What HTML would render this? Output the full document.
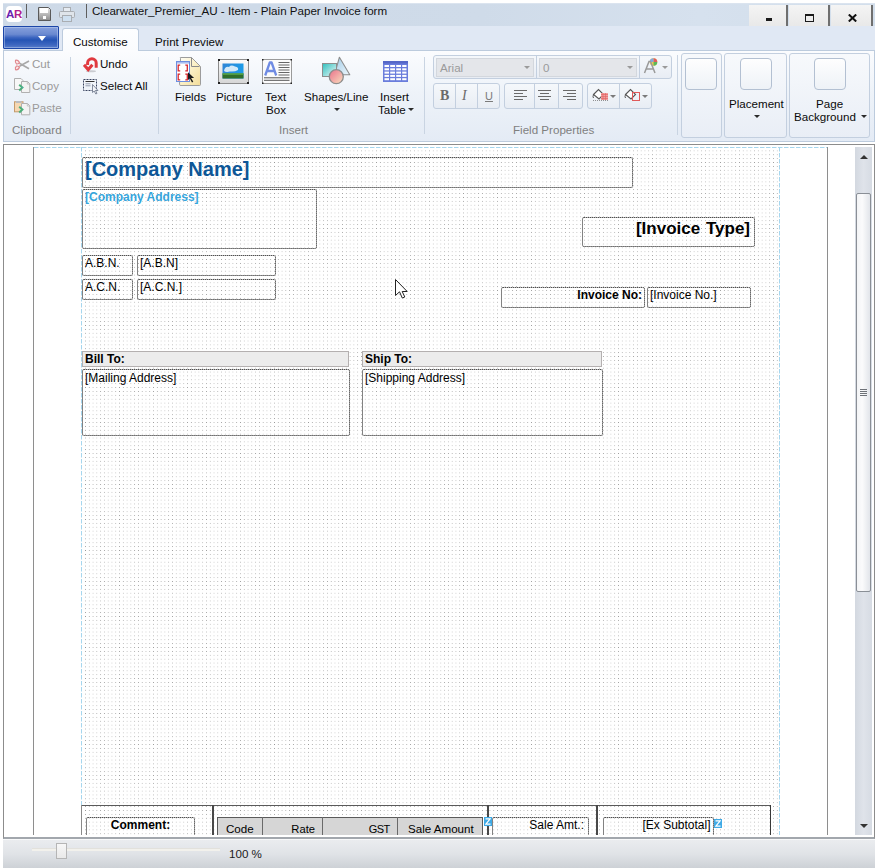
<!DOCTYPE html>
<html><head><meta charset="utf-8">
<style>
*{margin:0;padding:0;box-sizing:border-box}
html,body{width:876px;height:868px;overflow:hidden;background:#fff;font-family:"Liberation Sans",sans-serif;}
.a{position:absolute}
.t{position:absolute;white-space:nowrap;font-size:11.6px;color:#0a0a0a;line-height:14px}
.g{color:#9a9a9a}
#title{left:3px;top:3px;width:872px;height:23px;border-top:1px solid #dbe4ef;background:linear-gradient(90deg,#cdd9e7 0%,#cfdbe9 55%,#d6e1ee 80%,#d2deeb 100%)}
#tabrow{left:3px;top:26px;width:872px;height:25px;background:#e0e8f4}
#ribbon{left:3px;top:50px;width:872px;height:92px;border:1px solid #bccbdd;background:linear-gradient(#fbfcfe,#eef3f9 45%,#e4ebf5)}
#doc{left:3px;top:144px;width:872px;height:695px;border:1px solid #8c8c8c;border-bottom:2px solid #a2a7ad;background:#fff}
#status{left:3px;top:839px;width:872px;height:29px;border-top:1px solid #f8f9fa;background:linear-gradient(#eaecef,#e0e3e7 50%,#cdd1d6)}
.wb{position:absolute;top:5px;height:21px;background:linear-gradient(#f4f4f4,#e9e9e9);border-right:2px solid #6f6f6f}
.sep{position:absolute;width:1px;background:#c9d4e2}
.gb{position:absolute;border:1px solid #c3cfdf;border-radius:3px;background:linear-gradient(#f7f9fc,#e9eef6)}
.sq{position:absolute;border:1px solid #b3c0d2;border-radius:4px;background:linear-gradient(#fefefe,#eef2f7)}
.arr{position:absolute;width:0;height:0;border-left:3px solid transparent;border-right:3px solid transparent;border-top:3px solid #2a2a2a}
.fb{position:absolute;border:1px solid #c3cfdf;border-radius:3px;background:linear-gradient(#f5f8fb,#e8edf4)}
.dt{position:absolute;white-space:nowrap;color:#000;font-size:12px;line-height:14px}
.box{position:absolute;border:1px solid #b4b4b4;border-radius:2px}
.box::after{content:'';position:absolute;left:-1px;top:-1px;right:-1px;bottom:-1px;border:1px dotted #505050;border-radius:2px}
.dv{position:absolute;width:1px;background:#c3cfdf}
</style></head><body>
<!-- title bar -->
<div id="title" class="a"></div>
<div class="a" style="left:6px;top:6px;width:16px;height:16px;background:#fff;border-radius:4px"></div>
<div class="a" style="left:6px;top:8px;width:16px;text-align:center;font-weight:bold;font-size:11.5px;line-height:12px;letter-spacing:-0.3px;color:#8a1fa8"><span style="color:#6a1fb0">A</span><span style="color:#b0208e">R</span></div>
<div class="a" style="left:26px;top:4px;width:1px;height:14px;background:#5e5e5e"></div>
<svg class="a" style="left:38px;top:7px" width="13" height="14" viewBox="0 0 13 14">
 <path d="M0.5 0.5h10l2 2v11h-12z" fill="url(#fl)" stroke="#5a5a5a"/>
 <defs><linearGradient id="fl" x1="0" y1="0" x2="0" y2="1"><stop offset="0" stop-color="#e8e8e8"/><stop offset="1" stop-color="#8c8c8c"/></linearGradient></defs>
 <rect x="2" y="1" width="8" height="5" fill="#fff"/>
 <rect x="5" y="9" width="3" height="3" fill="#fff"/>
</svg>
<svg class="a" style="left:59px;top:7px" width="16" height="15" viewBox="0 0 16 15">
 <rect x="4.5" y="0.5" width="7" height="4" fill="#e6ebf1" stroke="#a9adb2"/>
 <rect x="0.5" y="4.5" width="15" height="6" rx="1" fill="#dfe4ea" stroke="#a9adb2"/>
 <rect x="3.5" y="8.5" width="9" height="6" fill="#cfe0f0" stroke="#a9adb2"/>
</svg>
<div class="a" style="left:86px;top:4px;width:1px;height:14px;background:#5e5e5e"></div>
<div class="t" style="left:92px;top:4px;color:#111">Clearwater_Premier_AU - Item - Plain Paper Invoice form</div>
<div class="wb" style="left:749px;width:39px"></div>
<div class="wb" style="left:789px;width:41px"></div>
<div class="wb" style="left:831px;width:42px"></div>
<div class="a" style="left:766px;top:18px;width:6px;height:3px;background:#1a1a1a"></div>
<div class="a" style="left:805px;top:14px;width:9px;height:8px;border:1.5px solid #1a1a1a;border-top-width:2.5px"></div>
<svg class="a" style="left:848px;top:14px" width="9" height="8" viewBox="0 0 9 8"><path d="M0.8 0.5L8.2 7.5M8.2 0.5L0.8 7.5" stroke="#111" stroke-width="2"/></svg>

<!-- tab row -->
<div id="tabrow" class="a"></div>
<div class="a" style="left:3px;top:26px;width:56px;height:23px;border:1px solid #1c46a8;border-radius:1px;box-shadow:inset 0 0 0 1px rgba(200,215,245,0.45);background:linear-gradient(#86a0dc,#6a89d0 35%,#3d66c0 50%,#2554b4 62%,#3e67c0 85%,#5a7ecb)"></div>
<div class="arr" style="left:38px;top:36px;border-left-width:4px;border-right-width:4px;border-top:5px solid #fff"></div>
<div class="a" style="left:62px;top:28px;width:77px;height:24px;border:1px solid #bccbdd;border-bottom:none;border-radius:3px 3px 0 0;background:linear-gradient(#fdfeff,#f9fbfd)"></div>
<div class="t" style="left:73px;top:35px">Customise</div>
<div class="t" style="left:155px;top:35px">Print Preview</div>

<!-- ribbon -->
<div id="ribbon" class="a"></div>
<div class="a" style="left:63px;top:50px;width:75px;height:2px;background:#fbfcfe"></div>

<!-- clipboard -->
<svg class="a" style="left:14px;top:59px" width="16" height="12" viewBox="0 0 16 12">
 <path d="M5.5 4.2L15 9.8M5.5 7.2L15 2" stroke="#a8a8a8" stroke-width="1.6"/>
 <path d="M1.5 1.2Q4.5 0.8 5.5 4Q4 5.2 2.5 5Q0.8 3.5 1.5 1.2z" fill="#fbe9ea" stroke="#e0868c" stroke-width="1.1"/>
 <path d="M1.5 10.8Q4.5 11.2 5.5 8Q4 6.8 2.5 7Q0.8 8.5 1.5 10.8z" fill="#fbe9ea" stroke="#e0868c" stroke-width="1.1"/>
</svg>
<div class="t g" style="left:32px;top:57px">Cut</div>
<svg class="a" style="left:14px;top:78px" width="17" height="16" viewBox="0 0 17 16">
 <path d="M0.5 0.5h6.5l2 2v9h-8.5z" fill="#f7f7f7" stroke="#b0b0b0"/>
 <path d="M7.5 3.5h6l2.3 2.3v8.7h-8.3z" fill="#f3f3f3" stroke="#b0b0b0"/>
 <path d="M13.3 3.8v2.2h2.2" fill="none" stroke="#b8b8b8" stroke-width="0.8"/>
 <path d="M5.2 6.8L8.4 9.6L5.2 12.4" fill="none" stroke="#4cb07a" stroke-width="2"/>
 <path d="M8.4 9.6l-0.8 -0.8" stroke="#4a9fd8" stroke-width="1"/>
</svg>
<div class="t g" style="left:32px;top:79px">Copy</div>
<svg class="a" style="left:14px;top:101px" width="17" height="15" viewBox="0 0 17 15">
 <rect x="0.5" y="0.8" width="8.5" height="10" fill="#f6d8b2" stroke="#c49a6c"/>
 <rect x="2" y="0" width="5.5" height="2" fill="#b9bcc0"/>
 <path d="M7.5 2.5h6l2.3 2.3v9h-8.3z" fill="#f3f3f3" stroke="#b0b0b0"/>
 <path d="M13.3 2.8v2.2h2.2" fill="none" stroke="#b8b8b8" stroke-width="0.8"/>
 <path d="M5.2 5.8L8.4 8.6L5.2 11.4" fill="none" stroke="#4cb07a" stroke-width="2"/>
</svg>
<div class="t g" style="left:32px;top:101px">Paste</div>
<div class="sep" style="left:70px;top:57px;height:77px"></div>
<svg class="a" style="left:83px;top:57px" width="16" height="16" viewBox="0 0 16 16">
 <ellipse cx="8" cy="14.2" rx="5" ry="1" fill="#c9cbd0"/>
 <path d="M13.2 10.8V6A4.3 4.3 0 0 0 4.6 6V8" fill="none" stroke="#e0393f" stroke-width="3"/>
 <path d="M1 7.8L5.2 12.6L9.4 7.8" fill="none" stroke="#e0393f" stroke-width="3" stroke-linejoin="miter"/>
</svg>
<div class="t" style="left:100px;top:57px">Undo</div>
<svg class="a" style="left:83px;top:79px" width="16" height="16" viewBox="0 0 16 16">
 <rect x="0.5" y="0.5" width="13" height="11" fill="none" stroke="#3a4560" stroke-width="1" stroke-dasharray="2 1"/>
 <path d="M2.5 2.5h9" stroke="#333" stroke-width="1"/>
 <path d="M2.5 4.8h5M2.5 6.8h5" stroke="#8a94a8" stroke-width="0.9"/>
 <path d="M9.5 5.5V13.5L11.2 12L12.8 15L14 14.4L12.5 11.5H15z" fill="#f4f6fa" stroke="#6a7488" stroke-width="0.8"/>
</svg>
<div class="t" style="left:100px;top:79px">Select All</div>
<div class="t g" style="left:12px;top:123px;color:#7f7f7f">Clipboard</div>
<div class="sep" style="left:158px;top:57px;height:77px"></div>

<!-- insert -->
<svg class="a" style="left:175px;top:56px" width="27" height="31" viewBox="0 0 27 31">
 <defs><linearGradient id="fy" x1="0" y1="0" x2="1" y2="1"><stop offset="0" stop-color="#fffef6"/><stop offset="0.5" stop-color="#fbf0c6"/><stop offset="1" stop-color="#f3dc98"/></linearGradient></defs>
 <path d="M5.5 2.5Q4.5 1.5 6 1.5H16.5L25.5 10.5V28.5Q25.5 29.5 24.5 29.5H6Q4.5 29.5 4.5 28.5z" fill="url(#fy)" stroke="#9c9c9c"/>
 <path d="M16.5 1.5V10.5H24.5" fill="none" stroke="#8a8a8a"/>
 <rect x="1.5" y="5.5" width="13" height="20" fill="#fff" stroke="#6d8fe0"/>
 <rect x="2" y="6" width="12" height="1.6" fill="#a9bdf0"/>
 <path d="M5.2 9.2H3.2V14.8H5.2M10.3 9.2H12.3V14.8H10.3M5.2 18.2H3.2V23.8H5.2M10.3 18.2H12.3V23.8H10.3" fill="none" stroke="#d8262c" stroke-width="1.3"/>
 <path d="M13 16.2V24l1.8-1.6 2.2 4 1.3-.7-2.2-3.8h3z" fill="#1a1a1a"/>
</svg>
<div class="t" style="left:175px;top:90px">Fields</div>
<svg class="a" style="left:218px;top:59px" width="31" height="25" viewBox="0 0 31 25">
 <defs><linearGradient id="pf" x1="0" y1="0" x2="0" y2="1"><stop offset="0" stop-color="#fbfbfb"/><stop offset="1" stop-color="#d6d6d6"/></linearGradient>
 <linearGradient id="sky" x1="0" y1="0" x2="1" y2="0"><stop offset="0" stop-color="#2f86d6"/><stop offset="1" stop-color="#1c9be8"/></linearGradient></defs>
 <rect x="0.5" y="0.5" width="30" height="24" fill="url(#pf)" stroke="#8c8c8c"/>
 <rect x="0" y="0" width="2" height="2" fill="#222"/><rect x="29" y="0" width="2" height="2" fill="#222"/><rect x="0" y="23" width="2" height="2" fill="#222"/><rect x="29" y="23" width="2" height="2" fill="#222"/>
 <rect x="4.5" y="4.5" width="21" height="15" fill="url(#sky)"/>
 <path d="M6 12Q7 7 11 8Q13 5.5 17 7.5Q21 8 20 11Q17 13 12 12.5Q8 13.5 6 12z" fill="#e6f3fb" opacity="0.9"/>
 <rect x="4.5" y="14.5" width="21" height="5" fill="#2f6e2a"/>
 <path d="M4.5 15h21" stroke="#5aa84a" stroke-width="1.5"/>
</svg>
<div class="t" style="left:216px;top:90px">Picture</div>
<svg class="a" style="left:262px;top:59px" width="31" height="25" viewBox="0 0 31 25">
 <rect x="0.5" y="0.5" width="29" height="24" fill="#fbfbfb" stroke="#9a9a9a"/>
 <rect x="0" y="0" width="1.5" height="1.5" fill="#222"/><rect x="28.5" y="0" width="1.5" height="1.5" fill="#222"/><rect x="0" y="23.5" width="1.5" height="1.5" fill="#222"/><rect x="28.5" y="23.5" width="1.5" height="1.5" fill="#222"/>
 <path d="M3.2 16.5L7.8 3.5h1.8L14.2 16.5M5 12h8" fill="none" stroke="#6f8be3" stroke-width="2.3" stroke-linejoin="round"/>
 <path d="M16.5 3.5h11M16.5 6h11M16.5 8.5h11M16.5 11h11M16.5 13.5h11M16.5 16h11" stroke="#555" stroke-width="0.9"/>
 <path d="M2 18.8h25.5M2 21.3h25.5" stroke="#555" stroke-width="1"/>
</svg>
<div class="t" style="left:265px;top:90px">Text</div>
<div class="t" style="left:266px;top:103px">Box</div>
<svg class="a" style="left:320px;top:56px" width="32" height="30" viewBox="0 0 32 30">
 <defs><linearGradient id="sq" x1="0" y1="0" x2="1" y2="1"><stop offset="0" stop-color="#2fbfbd"/><stop offset="1" stop-color="#f2fafa"/></linearGradient>
 <linearGradient id="tri" x1="0" y1="0" x2="1" y2="1"><stop offset="0" stop-color="#9fcbe8"/><stop offset="1" stop-color="#eef6fb"/></linearGradient>
 <linearGradient id="ci" x1="0" y1="0" x2="1" y2="1"><stop offset="0" stop-color="#ea6f8a"/><stop offset="1" stop-color="#f9e1c0"/></linearGradient></defs>
 <path d="M19.4 1.2L29.8 18.8H14.5z" fill="url(#tri)" stroke="#8d8d8d" stroke-width="1.1" stroke-linejoin="round"/>
 <rect x="2.5" y="7.5" width="14" height="13" fill="url(#sq)" stroke="#8d8d8d"/>
 <circle cx="16.3" cy="20.7" r="7" fill="url(#ci)" stroke="#8d8d8d" stroke-width="1.3"/>
</svg>
<div class="t" style="left:304px;top:90px">Shapes/Line</div>
<div class="arr" style="left:334px;top:108px"></div>
<svg class="a" style="left:383px;top:61px" width="25" height="21" viewBox="0 0 25 21">
 <rect x="0" y="0" width="25" height="21" fill="#6a7ddc"/>
 <rect x="0" y="0" width="25" height="2.5" fill="#5668c8"/>
 <g fill="#fff">
  <rect x="1.5" y="4" width="4.5" height="2"/><rect x="7.2" y="4" width="4.8" height="2"/><rect x="13.2" y="4" width="4.8" height="2"/><rect x="19.2" y="4" width="4.3" height="2"/>
  <rect x="1.5" y="7.3" width="4.5" height="2"/><rect x="7.2" y="7.3" width="4.8" height="2"/><rect x="13.2" y="7.3" width="4.8" height="2"/><rect x="19.2" y="7.3" width="4.3" height="2"/>
  <rect x="1.5" y="10.6" width="4.5" height="2"/><rect x="7.2" y="10.6" width="4.8" height="2"/><rect x="13.2" y="10.6" width="4.8" height="2"/><rect x="19.2" y="10.6" width="4.3" height="2"/>
  <rect x="1.5" y="13.9" width="4.5" height="2"/><rect x="7.2" y="13.9" width="4.8" height="2"/><rect x="13.2" y="13.9" width="4.8" height="2"/><rect x="19.2" y="13.9" width="4.3" height="2"/>
  <rect x="1.5" y="17.2" width="4.5" height="2"/><rect x="7.2" y="17.2" width="4.8" height="2"/><rect x="13.2" y="17.2" width="4.8" height="2"/><rect x="19.2" y="17.2" width="4.3" height="2"/>
 </g>
</svg>
<div class="t" style="left:380px;top:90px">Insert</div>
<div class="t" style="left:378px;top:103px">Table</div>
<div class="arr" style="left:408px;top:108px"></div>
<div class="t g" style="left:279px;top:123px;color:#7f7f7f">Insert</div>
<div class="sep" style="left:424px;top:57px;height:77px"></div>

<!-- field properties -->
<div class="fb" style="left:433px;top:55px;width:239px;height:24px"></div>
<div class="a" style="left:436px;top:58px;width:98px;height:19px;background:#e4e6ea;border:1px solid #d3d7dd"></div>
<div class="a" style="left:539px;top:58px;width:98px;height:19px;background:#e4e6ea;border:1px solid #d3d7dd"></div>
<div class="dv" style="left:536px;top:56px;height:22px"></div>
<div class="dv" style="left:639px;top:56px;height:22px"></div>
<div class="t" style="left:440px;top:61px;color:#9a9a9a;font-size:11.6px">Arial</div>
<div class="t" style="left:543px;top:61px;color:#9a9a9a">0</div>
<div class="arr" style="left:524px;top:66px;border-top-color:#9a9a9a"></div>
<div class="arr" style="left:627px;top:66px;border-top-color:#9a9a9a"></div>
<svg class="a" style="left:643px;top:57px" width="16" height="17" viewBox="0 0 16 17">
 <circle cx="10.5" cy="5" r="3.8" fill="#f2c94c"/>
 <path d="M10.5 5V1.2A3.8 3.8 0 0 1 14.3 5z" fill="#e25c5c"/>
 <path d="M10.5 5h3.8A3.8 3.8 0 0 1 10.5 8.8z" fill="#5cb85c"/>
 <path d="M6.7 5A3.8 3.8 0 0 1 10.5 1.2V5z" fill="#7fa8e0"/>
 <path d="M1.5 16L6 4.5h1.5L12 16M3.3 12h7" fill="none" stroke="#9a9a9a" stroke-width="1.5"/>
</svg>
<div class="arr" style="left:662px;top:66px;border-top-color:#9a9a9a"></div>

<div class="fb" style="left:433px;top:83px;width:67px;height:26px"></div>
<div class="dv" style="left:455px;top:84px;height:24px"></div>
<div class="dv" style="left:477px;top:84px;height:24px"></div>
<div class="a" style="left:440px;top:88px;font-family:'Liberation Serif',serif;font-weight:bold;font-size:14px;line-height:16px;color:#6a6a6a">B</div>
<div class="a" style="left:462px;top:88px;font-family:'Liberation Serif',serif;font-style:italic;font-size:14px;line-height:16px;color:#6a6a6a">I</div>
<div class="a" style="left:485px;top:88px;font-size:11px;line-height:16px;color:#7a7a7a;text-decoration:underline">U</div>
<div class="fb" style="left:504px;top:83px;width:79px;height:26px"></div>
<div class="dv" style="left:534px;top:84px;height:24px"></div>
<div class="dv" style="left:558px;top:84px;height:24px"></div>
<svg class="a" style="left:514px;top:90px" width="64" height="11" viewBox="0 0 64 11">
 <path d="M0 0.5h13M0 3.5h9M0 6.5h13M0 9.5h9" stroke="#6a6a6a"/>
 <path d="M24 0.5h13M26 3.5h9M24 6.5h13M26 9.5h9" stroke="#6a6a6a"/>
 <path d="M49 0.5h13M53 3.5h9M49 6.5h13M53 9.5h9" stroke="#6a6a6a"/>
</svg>
<div class="fb" style="left:587px;top:83px;width:65px;height:26px"></div>
<div class="dv" style="left:619px;top:84px;height:24px"></div>
<svg class="a" style="left:592px;top:88px" width="18" height="14" viewBox="0 0 18 14">
 <path d="M1.5 6.5L6.5 1.5L11.5 6.5L7 11z" fill="#fff" stroke="#555" stroke-width="1.1"/>
 <path d="M1.5 6.5Q0.5 9 1.5 10" fill="none" stroke="#555" stroke-width="1"/>
 <rect x="9" y="5" width="7" height="7" fill="#f0a0a0"/>
 <path d="M9 6.5h7M9 8.5h7M9 10.5h7M11 5v7M13.5 5v7" stroke="#e06060" stroke-width="0.6"/>
 <path d="M1 12.5h16" stroke="#777" stroke-width="0.8" stroke-dasharray="1 1"/>
</svg>
<div class="arr" style="left:610px;top:95px;border-top-color:#7a7a7a"></div>
<svg class="a" style="left:624px;top:88px" width="18" height="14" viewBox="0 0 18 14">
 <path d="M1.5 6.5L6.5 1.5L11.5 6.5L7 11z" fill="#fff" stroke="#555" stroke-width="1.1"/>
 <path d="M1.5 6.5Q0.5 9 1.5 10" fill="none" stroke="#555" stroke-width="1"/>
 <rect x="8.5" y="4.5" width="7" height="8" fill="none" stroke="#e05a5a"/>
</svg>
<div class="arr" style="left:642px;top:95px;border-top-color:#7a7a7a"></div>
<div class="t g" style="left:513px;top:123px;color:#7f7f7f">Field Properties</div>
<div class="sep" style="left:677px;top:55px;height:80px"></div>

<!-- right groups -->
<div class="gb" style="left:681px;top:53px;width:41px;height:85px"></div>
<div class="sq" style="left:685px;top:58px;width:32px;height:32px"></div>
<div class="gb" style="left:724px;top:53px;width:63px;height:85px"></div>
<div class="sq" style="left:740px;top:58px;width:32px;height:32px"></div>
<div class="t" style="left:729px;top:97px">Placement</div>
<div class="arr" style="left:754px;top:115px"></div>
<div class="gb" style="left:789px;top:53px;width:81px;height:85px"></div>
<div class="sq" style="left:814px;top:58px;width:32px;height:32px"></div>
<div class="t" style="left:816px;top:97px">Page</div>
<div class="t" style="left:794px;top:110px">Background</div>
<div class="arr" style="left:861px;top:115px"></div>

<!-- document -->
<div id="doc" class="a"></div>
<div class="a" style="left:33px;top:147px;width:1px;height:689px;background:#8e8e8e"></div>
<div class="a" style="left:827px;top:147px;width:1px;height:689px;background:#8e8e8e"></div>
<svg class="a" style="left:0;top:0" width="876" height="868">
 <defs><filter id="gam" x="0" y="0" width="876" height="868" filterUnits="userSpaceOnUse" color-interpolation-filters="sRGB"><feComponentTransfer><feFuncA type="gamma" amplitude="1" exponent="1.7" offset="0"/></feComponentTransfer></filter></defs><g filter="url(#gam)"><path d="M85 150.88H779M85 154.76H779M85 158.64H779M85 162.52H779M85 166.40H779M85 170.28H779M85 174.16H779M85 178.04H779M85 181.92H779M85 185.80H779M85 189.68H779M85 193.56H779M85 197.44H779M85 201.32H779M85 205.20H779M85 209.08H779M85 212.96H779M85 216.84H779M85 220.72H779M85 224.60H779M85 228.48H779M85 232.36H779M85 236.24H779M85 240.12H779M85 244.00H779M85 247.88H779M85 251.76H779M85 255.64H779M85 259.52H779M85 263.40H779M85 267.28H779M85 271.16H779M85 275.04H779M85 278.92H779M85 282.80H779M85 286.68H779M85 290.56H779M85 294.44H779M85 298.32H779M85 302.20H779M85 306.08H779M85 309.96H779M85 313.84H779M85 317.72H779M85 321.60H779M85 325.48H779M85 329.36H779M85 333.24H779M85 337.12H779M85 341.00H779M85 344.88H779M85 348.76H779M85 352.64H779M85 356.52H779M85 360.40H779M85 364.28H779M85 368.16H779M85 372.04H779M85 375.92H779M85 379.80H779M85 383.68H779M85 387.56H779M85 391.44H779M85 395.32H779M85 399.20H779M85 403.08H779M85 406.96H779M85 410.84H779M85 414.72H779M85 418.60H779M85 422.48H779M85 426.36H779M85 430.24H779M85 434.12H779M85 438.00H779M85 441.88H779M85 445.76H779M85 449.64H779M85 453.52H779M85 457.40H779M85 461.28H779M85 465.16H779M85 469.04H779M85 472.92H779M85 476.80H779M85 480.68H779M85 484.56H779M85 488.44H779M85 492.32H779M85 496.20H779M85 500.08H779M85 503.96H779M85 507.84H779M85 511.72H779M85 515.60H779M85 519.48H779M85 523.36H779M85 527.24H779M85 531.12H779M85 535.00H779M85 538.88H779M85 542.76H779M85 546.64H779M85 550.52H779M85 554.40H779M85 558.28H779M85 562.16H779M85 566.04H779M85 569.92H779M85 573.80H779M85 577.68H779M85 581.56H779M85 585.44H779M85 589.32H779M85 593.20H779M85 597.08H779M85 600.96H779M85 604.84H779M85 608.72H779M85 612.60H779M85 616.48H779M85 620.36H779M85 624.24H779M85 628.12H779M85 632.00H779M85 635.88H779M85 639.76H779M85 643.64H779M85 647.52H779M85 651.40H779M85 655.28H779M85 659.16H779M85 663.04H779M85 666.92H779M85 670.80H779M85 674.68H779M85 678.56H779M85 682.44H779M85 686.32H779M85 690.20H779M85 694.08H779M85 697.96H779M85 701.84H779M85 705.72H779M85 709.60H779M85 713.48H779M85 717.36H779M85 721.24H779M85 725.12H779M85 729.00H779M85 732.88H779M85 736.76H779M85 740.64H779M85 744.52H779M85 748.40H779M85 752.28H779M85 756.16H779M85 760.04H779M85 763.92H779M85 767.80H779M85 771.68H779M85 775.56H779M85 779.44H779M85 783.32H779M85 787.20H779M85 791.08H779M85 794.96H779M85 798.84H779M85 802.72H779M85 806.60H779M85 810.48H779M85 814.36H779M85 818.24H779M85 822.12H779M85 826.00H779M85 829.88H779M85 833.76H779" stroke="#959595" stroke-width="1" stroke-dasharray="1 2.78"/></g>
 <path d="M34 147.5H827" stroke="#a6d6ee" stroke-width="1" stroke-dasharray="4.5 1.5"/>
 <path d="M81.5 147V835" stroke="#a6d6ee" stroke-width="1" stroke-dasharray="4.5 1.5"/>
 <path d="M779.5 147V835" stroke="#a6d6ee" stroke-width="1" stroke-dasharray="4.5 1.5"/>
</svg>
<!-- page content -->
<div class="box" style="left:82px;top:157px;width:551px;height:31px"></div>
<div class="dt" style="left:85px;top:159px;font-size:20px;line-height:20px;font-weight:bold;color:#0e5797">[Company Name]</div>
<div class="box" style="left:82px;top:189px;width:235px;height:60px"></div>
<div class="dt" style="left:85px;top:190px;font-weight:bold;color:#36a5dc">[Company Address]</div>
<div class="box" style="left:582px;top:217px;width:173px;height:30px"></div>
<div class="dt" style="left:582px;top:220px;width:168px;text-align:right;font-size:17px;line-height:18px;font-weight:bold;word-spacing:1px">[Invoice Type]</div>
<div class="box" style="left:82px;top:255px;width:51px;height:21px"></div>
<div class="dt" style="left:85px;top:256px">A.B.N.</div>
<div class="box" style="left:137px;top:255px;width:139px;height:21px"></div>
<div class="dt" style="left:140px;top:256px">[A.B.N]</div>
<div class="box" style="left:82px;top:279px;width:51px;height:21px"></div>
<div class="dt" style="left:85px;top:280px">A.C.N.</div>
<div class="box" style="left:137px;top:279px;width:139px;height:21px"></div>
<div class="dt" style="left:140px;top:280px">[A.C.N.]</div>
<div class="box" style="left:501px;top:287px;width:144px;height:21px"></div>
<div class="dt" style="left:501px;top:288px;width:141px;text-align:right;font-weight:bold">Invoice No:</div>
<div class="box" style="left:647px;top:287px;width:104px;height:21px"></div>
<div class="dt" style="left:650px;top:288px">[Invoice No.]</div>
<div class="a" style="left:82px;top:351px;width:267px;height:16px;background:#ececec;border:1px solid #b4b0b0"></div>
<div class="dt" style="left:85px;top:352px;font-weight:bold">Bill To:</div>
<div class="box" style="left:82px;top:369px;width:268px;height:67px"></div>
<div class="dt" style="left:85px;top:371px">[Mailing Address]</div>
<div class="a" style="left:362px;top:351px;width:240px;height:16px;background:#ececec;border:1px solid #b4b0b0"></div>
<div class="dt" style="left:365px;top:352px;font-weight:bold">Ship To:</div>
<div class="box" style="left:362px;top:369px;width:241px;height:67px"></div>
<div class="dt" style="left:365px;top:371px">[Shipping Address]</div>
<!-- bottom section -->
<div class="a" style="left:81px;top:805px;width:690px;height:1px;background:#5a5a5a"></div>
<div class="a" style="left:81px;top:805px;width:1px;height:30px;background:#8a8a8a"></div>
<div class="a" style="left:212px;top:805px;width:2px;height:30px;background:#484848"></div>
<div class="a" style="left:487px;top:805px;width:2px;height:30px;background:#484848"></div>
<div class="a" style="left:596px;top:805px;width:2px;height:30px;background:#484848"></div>
<div class="a" style="left:770px;top:805px;width:1px;height:30px;background:#383838"></div>
<div class="box" style="left:86px;top:817px;width:109px;height:20px"></div>
<div class="dt" style="left:86px;top:818px;width:109px;text-align:center;font-weight:bold">Comment:</div>
<div class="a" style="left:217px;top:817px;width:266px;height:20px;background:#d6d6d6;border:1px solid #5a5a5a;border-width:1.5px 1.5px 0 1.5px"></div>
<div class="a" style="left:262px;top:817px;width:1px;height:20px;background:#6a6a6a"></div>
<div class="a" style="left:322px;top:817px;width:1px;height:20px;background:#6a6a6a"></div>
<div class="a" style="left:397px;top:817px;width:1px;height:20px;background:#6a6a6a"></div>
<div class="dt" style="left:226px;top:822px;font-size:11.6px">Code</div>
<div class="dt" style="left:263px;top:822px;width:52px;text-align:right;font-size:11.2px">Rate</div>
<div class="dt" style="left:323px;top:822px;width:66.5px;text-align:right;font-size:11px;letter-spacing:-0.6px">GST</div>
<div class="dt" style="left:408px;top:822px;font-size:11.6px">Sale Amount</div>
<div class="a" style="left:484px;top:817px;width:8px;height:9px;background:#3faae6"><svg class="a" style="left:1px;top:1px" width="6" height="7" viewBox="0 0 6 7"><path d="M0.5 0.8H5.2L0.8 6.2H5.5" fill="none" stroke="#fff" stroke-width="1.3"/></svg></div>
<div class="box" style="left:492px;top:817px;width:97px;height:20px"></div>
<div class="dt" style="left:492px;top:818px;width:92px;text-align:right">Sale Amt.:</div>
<div class="box" style="left:603px;top:817px;width:111px;height:20px"></div>
<div class="dt" style="left:603px;top:818px;width:107.5px;text-align:right">[Ex Subtotal]</div>
<div class="a" style="left:714px;top:819px;width:8px;height:9px;background:#3faae6"><svg class="a" style="left:1px;top:1px" width="6" height="7" viewBox="0 0 6 7"><path d="M0.5 0.8H5.2L0.8 6.2H5.5" fill="none" stroke="#fff" stroke-width="1.3"/></svg></div>
<!-- cursor -->
<svg class="a" style="left:395px;top:279px" width="14" height="20" viewBox="0 0 14 20">
 <path d="M0.5 0.5V16.5L4.5 12.8L7.3 19L9.8 18L7.2 12.5H12.2Z" fill="#fff" stroke="#222" stroke-width="1"/>
</svg>
<div class="a" style="left:4px;top:835px;width:870px;height:2px;background:#fff"></div>
<!-- scrollbar -->
<div class="a" style="left:855px;top:147px;width:17px;height:688px;background:linear-gradient(90deg,#d3d8e0,#dfe3ea 50%,#d6dbe3)"></div>
<div class="arr" style="left:860px;top:155px;border-left-width:4px;border-right-width:4px;border-top:none;border-bottom:4px solid #333"></div>
<div class="arr" style="left:860px;top:824px;border-left-width:4px;border-right-width:4px;border-top:4px solid #333"></div>
<div class="a" style="left:856px;top:193px;width:15px;height:399px;border:1px solid #8a8f96;border-radius:2px;background:linear-gradient(90deg,#f3f4f6,#fbfbfc 40%,#e2e5ea)"></div>
<div class="a" style="left:860px;top:389px;width:7px;height:1px;background:#6e7278;box-shadow:0 2px 0 #6e7278,0 4px 0 #6e7278,0 6px 0 #6e7278"></div>
<div id="status" class="a"></div>
<div class="a" style="left:32px;top:848px;width:188px;height:3px;background:#f2f1ec;border-top:1px solid #e2e1dc"></div>
<div class="a" style="left:56px;top:843px;width:11px;height:16px;background:linear-gradient(#f7f7f7,#e9e9e9);border:1px solid #b5b5b5"></div>
<div class="t" style="left:229px;top:847px;color:#1a1a1a">100 %</div>
</body></html>
